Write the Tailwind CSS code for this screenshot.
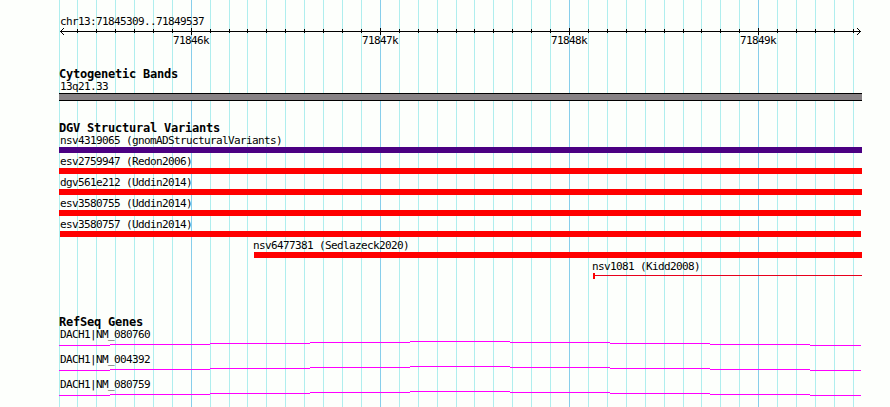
<!DOCTYPE html>
<html lang="en">
<head>
<meta charset="utf-8">
<title>chr13:71845309..71849537</title>
<script src="https://cdn.jsdelivr.net/npm/@tailwindcss/browser@4"></script>
</head>
<body class="relative h-[407px] w-[890px] overflow-hidden bg-[#fdfffc] font-['DejaVu_Sans_Mono',monospace] text-[11px] tracking-[-0.62px] text-black">
<!-- grid behind the tracks -->
<svg class="absolute inset-0" width="890" height="407" shape-rendering="crispEdges" fill="none">
<path stroke="#afeeee" d="M59.5 0v407M77.5 0v407M96.5 0v407M115.5 0v407M134.5 0v407M153.5 0v407M172.5 0v407M210.5 0v407M229.5 0v407M247.5 0v407M266.5 0v407M285.5 0v407M304.5 0v407M323.5 0v407M342.5 0v407M361.5 0v407M399.5 0v407M418.5 0v407M437.5 0v407M456.5 0v407M474.5 0v407M493.5 0v407M512.5 0v407M531.5 0v407M550.5 0v407M588.5 0v407M607.5 0v407M626.5 0v407M645.5 0v407M664.5 0v407M683.5 0v407M701.5 0v407M720.5 0v407M739.5 0v407M777.5 0v407M796.5 0v407M815.5 0v407M834.5 0v407M853.5 0v407"/>
<path stroke="#87ceeb" d="M191.5 0v407M380.5 0v407M569.5 0v407M758.5 0v407"/>
</svg>
<main class="relative ml-[59px] flex w-[803px] flex-col pt-[15px]">
  <header class="flex h-[53px] flex-col">
    <div class="h-[12px] pl-px leading-[13px]">chr13:71845309..71849537</div>
    <svg class="block" width="803" height="8" viewBox="59 27 803 8" shape-rendering="crispEdges" fill="none" stroke="#000">
      <path d="M60 31.5H861M77.5 29v4M96.5 29v4M115.5 29v4M134.5 29v4M153.5 29v4M172.5 29v4M210.5 29v4M229.5 29v4M247.5 29v4M266.5 29v4M285.5 29v4M304.5 29v4M323.5 29v4M342.5 29v4M361.5 29v4M399.5 29v4M418.5 29v4M437.5 29v4M456.5 29v4M474.5 29v4M493.5 29v4M512.5 29v4M531.5 29v4M550.5 29v4M588.5 29v4M607.5 29v4M626.5 29v4M645.5 29v4M664.5 29v4M683.5 29v4M701.5 29v4M720.5 29v4M739.5 29v4M777.5 29v4M796.5 29v4M815.5 29v4M834.5 29v4M853.5 29v4M191.5 28v7M380.5 28v7M569.5 28v7M758.5 28v7"/>
      <path d="M61 30.5h1M62 29.5h1M63 28.5h1M61 32.5h1M62 33.5h1M63 34.5h1M859 30.5h1M858 29.5h1M857 28.5h1M859 32.5h1M858 33.5h1M857 34.5h1"/>
    </svg>
    <div class="flex gap-[153px] pl-[114px] leading-[12px]"><span class="w-[36px]">71846k</span><span class="w-[36px]">71847k</span><span class="w-[36px]">71848k</span><span class="w-[36px]">71849k</span></div>
  </header>
  <section class="flex h-[54px] flex-col">
    <h2 class="h-[12px] text-[12px] leading-[12px] font-bold tracking-[-0.22px]">Cytogenetic Bands</h2>
    <div class="h-[13px] pl-px leading-[13px]">13q21.33</div>
    <div class="h-[8px] border-y border-black bg-[#878285]"></div>
  </section>
  <section class="flex h-[194px] flex-col">
    <h2 class="h-[12px] text-[12px] leading-[12px] font-bold tracking-[-0.22px]">DGV Structural Variants</h2>
    <div class="h-[21px] pl-px leading-[13px]">nsv4319065 (gnomADStructuralVariants)<div class="-ml-px h-[6px] bg-[#4b0082]"></div></div>
    <div class="h-[21px] pl-px leading-[13px]">esv2759947 (Redon2006)<div class="-ml-px h-[6px] bg-[#ff0000]"></div></div>
    <div class="h-[21px] pl-px leading-[13px]">dgv561e212 (Uddin2014)<div class="-ml-px h-[6px] bg-[#ff0000]"></div></div>
    <div class="h-[21px] pl-px leading-[13px]">esv3580755 (Uddin2014)<div class="mr-px -ml-px h-[6px] bg-[#ff0000]"></div></div>
    <div class="h-[21px] pl-px leading-[13px]">esv3580757 (Uddin2014)<div class="mr-px h-[6px] bg-[#ff0000]"></div></div>
    <div class="ml-[194px] h-[21px] leading-[13px]">nsv6477381 (Sedlazeck2020)<div class="ml-px h-[6px] bg-[#ff0000]"></div></div>
    <div class="ml-[533px] h-[21px] leading-[13px]">nsv1081 (Kidd2008)<div class="ml-px flex h-[6px]"><div class="w-[2px] bg-[#ff0000]"></div><div class="mt-[2px] h-px flex-1 bg-[#e8001c]"></div></div></div>
  </section>
  <section class="flex flex-col">
    <h2 class="h-[12px] text-[12px] leading-[12px] font-bold tracking-[-0.22px]">RefSeq Genes</h2>
    <div class="h-[25px] pl-px leading-[13px]">DACH1|NM_080760
<svg class="-ml-px block" width="802" height="5" shape-rendering="crispEdges" stroke="#ff00ff"><path d="M0 4.5h51M51 3.5h100M151 2.5h100M251 1.5h100M351 .5h100M451 1.5h100M551 2.5h100M651 3.5h100M751 4.5h51"/></svg></div>
    <div class="h-[25px] pl-px leading-[13px]">DACH1|NM_004392
<svg class="-ml-px block" width="802" height="5" shape-rendering="crispEdges" stroke="#ff00ff"><path d="M0 4.5h51M51 3.5h100M151 2.5h100M251 1.5h100M351 .5h100M451 1.5h100M551 2.5h100M651 3.5h100M751 4.5h51"/></svg></div>
    <div class="h-[23px] pl-px leading-[13px]">DACH1|NM_080759
<svg class="-ml-px block" width="802" height="5" shape-rendering="crispEdges" stroke="#ff00ff"><path d="M0 4.5h51M51 3.5h100M151 2.5h100M251 1.5h100M351 .5h100M451 1.5h100M551 2.5h100M651 3.5h100M751 4.5h51"/></svg></div>
  </section>
</main>
</body>
</html>
